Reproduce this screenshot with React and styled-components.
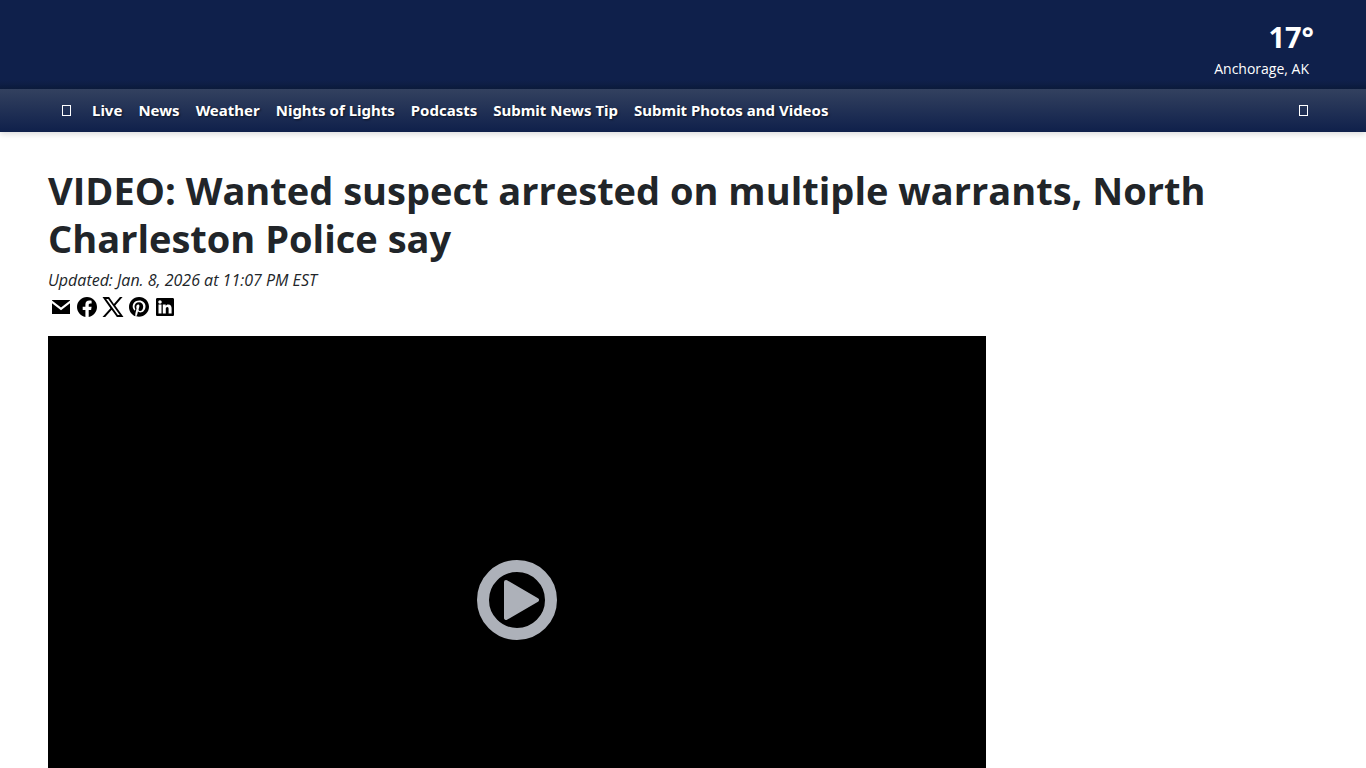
import React from 'react'
import styled, { createGlobalStyle } from 'styled-components'

const GlobalStyle = createGlobalStyle`
  *,
  *::before {
    box-sizing: border-box;
  }

  body {
    margin: 0;
    background: #fff;
    color: #212529;
    font-family: 'Segoe UI', 'Open Sans', 'Noto Sans', sans-serif;
    font-size: 16px;
    line-height: 24px;
  }
`

const Masthead = styled.header`
  display: flex;
  justify-content: flex-end;
  height: 89px;
  padding: 18px 52px 0;
  background: linear-gradient(#0f204b 80px, #0c1b3d);
`

const Forecast = styled.a`
  display: flex;
  flex-direction: column;
  align-items: flex-end;
  color: #fff;
  text-decoration: none;
`

const Temperature = styled.span`
  font-size: 29px;
  font-weight: 700;
  line-height: 38px;
`

const Place = styled.span`
  padding: 2px 5px 0 0;
  font-size: 14px;
  line-height: 22px;
`

const NavBar = styled.nav`
  display: flex;
  align-items: center;
  justify-content: space-between;
  height: 43px;
  padding: 0 45px 0 48px;
  background: linear-gradient(#33415f, #0f204b);
  box-shadow: 0 2px 6px rgba(0, 0, 0, 0.15);
`

const NavLinks = styled.div`
  display: flex;
  align-items: center;
`

const NavLink = styled.a`
  padding: 0 8px 2px;
  color: #fff;
  font-family: 'Segoe UI', 'Noto Sans', sans-serif;
  font-size: 15px;
  font-weight: 700;
  line-height: 22px;
  white-space: nowrap;
  text-decoration: none;
  text-shadow: 1px 1px 2px rgba(0, 0, 0, 0.6);
`

const NavButton = styled.button`
  display: flex;
  align-items: center;
  justify-content: center;
  width: 36px;
  height: 40px;
  padding: 0;
  border: 0;
  background: none;

  &::before {
    content: '';
    width: 9px;
    height: 11px;
    border: 1px solid #fff;
  }
`

const Article = styled.main`
  padding: 34px 48px 0;
`

const Headline = styled.h1`
  margin: 0 0 8px;
  font-size: 38px;
  font-weight: 700;
  line-height: 48px;
`

const Updated = styled.p`
  margin: 0;
  font-size: 16px;
  font-style: italic;
  line-height: 20px;
`

const ShareList = styled.div`
  display: flex;
  margin: 4px 0 16px;
`

const ShareLink = styled.a`
  display: flex;
  width: 26px;
  height: 26px;
  align-items: center;
  justify-content: center;
  color: #000;

  svg {
    width: 24px;
    height: 24px;
    fill: currentColor;
  }
`

const Player = styled.section`
  display: flex;
  align-items: center;
  justify-content: center;
  width: 73.86%;
  aspect-ratio: 16 / 9;
  background: #000;
`

const PlayButton = styled.button`
  width: 80px;
  height: 80px;
  padding: 0;
  border: 0;
  background: none;

  svg {
    display: block;
  }
`

const links = [
  'Live',
  'News',
  'Weather',
  'Nights of Lights',
  'Podcasts',
  'Submit News Tip',
  'Submit Photos and Videos'
]

const shares = [
  {
    name: 'Email',
    path: 'M3 5h18v.6l-9 7-9-7V5zm0 3.200 9 7 9-7V19H3V8.200z'
  },
  {
    name: 'Facebook',
    path: 'M12 2C6.500 2 2 6.500 2 12c0 5 3.700 9.100 8.400 9.900v-7H7.700V11.800h2.700V9.600c0-2.500 1.500-4 3.900-4 1.100 0 2.300.2 2.300.2v2.700h-1.400c-1.200 0-1.500.8-1.500 1.600v1.700h2.900l-.5 3.100h-2.400v7C18.300 21.100 22 17 22 12c0-5.500-4.500-10-10-10z'
  },
  {
    name: 'X',
    path: 'M14.200 10.400 21.600 2h-2.700l-6 6.900L8.100 2H1.500l7.900 11.200L1.500 22h2.700l6.500-7.300 5.200 7.300h6.600l-8.300-11.600zM5.200 3.900h2l11.600 16.200h-2L5.200 3.900z'
  },
  {
    name: 'Pinterest',
    path: 'M12.300 2C6.500 1.800 2 6.500 2 12c0 4.300 2.700 7.900 6.400 9.300-.1-.8-.2-2 0-2.900.2-.8 1.200-5 1.200-5s-.3-.6-.3-1.500c0-1.400.8-2.400 1.800-2.400.9 0 1.300.6 1.300 1.400 0 .9-.5 2.100-.8 3.300-.2 1 .5 1.800 1.500 1.800 1.800 0 3.100-1.900 3.100-4.600 0-2.400-1.700-4.100-4.200-4.100-2.800 0-4.500 2.100-4.500 4.300 0 .9.3 1.800.7 2.300.1.1.1.2.1.3l-.3 1.100c0 .2-.1.2-.3.1-1.200-.6-2-2.400-2-3.900 0-3.200 2.300-6.100 6.600-6.100 3.500 0 6.200 2.500 6.200 5.800 0 3.400-2.200 6.200-5.200 6.200-1 0-2-.5-2.300-1.100l-.6 2.400c-.2.9-.8 2-1.200 2.600 1 .3 1.900.5 2.800.5 5.500 0 10-4.500 10-10 0-5.400-4.300-9.800-9.700-9.800z'
  },
  {
    name: 'LinkedIn',
    path: 'M19.700 3H4.300C3.600 3 3 3.600 3 4.300v15.400c0 .7.6 1.300 1.300 1.300h15.400c.7 0 1.300-.6 1.300-1.300V4.300c0-.7-.6-1.300-1.300-1.300zM8.500 18.500H5.500V9.600h3v8.900zM7 8.700c-1 0-1.700-.8-1.700-1.700S6 5.300 7 5.300s1.700.8 1.700 1.700S8 8.700 7 8.700zM18.600 18.500h-3v-4.300c0-1.200-.1-2.200-1.300-2.200s-1.500 1-1.500 2.200v4.300h-3V9.600h2.900v1.200c.4-.7 1.200-1.400 2.500-1.400 2.700 0 3.400 1.800 3.400 4.200v4.900z'
  }
]

export default function App () {
  return (
    <>
      <GlobalStyle />
      <Masthead>
        <Forecast href='#weather'>
          <Temperature>17°</Temperature>
          <Place>Anchorage, AK</Place>
        </Forecast>
      </Masthead>
      <NavBar>
        <NavLinks>
          <NavButton type='button' aria-label='Menu' />
          {links.map(link => (
            <NavLink key={link} href='#'>{link}</NavLink>
          ))}
        </NavLinks>
        <NavButton type='button' aria-label='Search' />
      </NavBar>
      <Article>
        <Headline>VIDEO: Wanted suspect arrested on multiple warrants, North Charleston Police say</Headline>
        <Updated>Updated: Jan. 8, 2026 at 11:07 PM EST</Updated>
        <ShareList>
          {shares.map(share => (
            <ShareLink key={share.name} href='#' aria-label={share.name}>
              <svg viewBox='0 0 24 24'>
                <path fillRule='evenodd' d={share.path} />
              </svg>
            </ShareLink>
          ))}
        </ShareList>
        <Player>
          <PlayButton type='button' aria-label='Play video'>
            <svg viewBox='0 0 80 80'>
              <circle cx='40' cy='40' r='34' fill='none' stroke='#adb1b9' strokeWidth='12' />
              <path d='M29 22 60 40 29 58z' fill='#adb1b9' stroke='#adb1b9' strokeWidth='4' strokeLinejoin='round' />
            </svg>
          </PlayButton>
        </Player>
      </Article>
    </>
  )
}
